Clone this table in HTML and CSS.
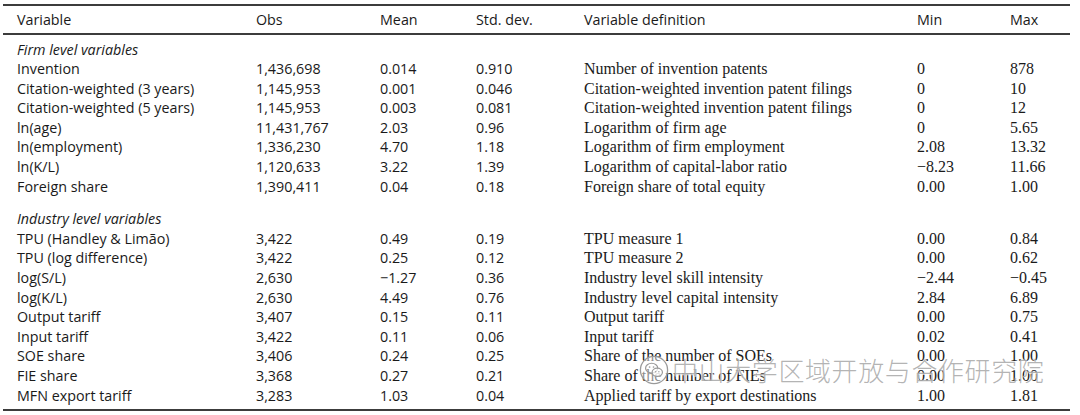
FILE: index.html
```html
<!DOCTYPE html>
<html lang="en">
<head>
<meta charset="utf-8">
<title>Summary statistics</title>
<link rel="stylesheet" href="styles.css">
</head>
<body>
<div class="page">
<table class="stats">
  <colgroup>
    <col class="c-var"><col class="c-obs"><col class="c-mean"><col class="c-sd"><col class="c-def"><col class="c-min"><col class="c-max">
  </colgroup>
  <thead>
    <tr><th class="first">Variable</th><th>Obs</th><th>Mean</th><th>Std. dev.</th><th>Variable definition</th><th>Min</th><th>Max</th></tr>
  </thead>
  <tbody>
    <tr class="sect top"><td class="first" colspan="7"><em>Firm level variables</em></td></tr>
    <tr><td class="first">Invention</td><td>1,436,698</td><td>0.014</td><td>0.910</td><td class="serif">Number of invention patents</td><td class="serif">0</td><td class="serif">878</td></tr>
    <tr><td class="first">Citation-weighted (3 years)</td><td>1,145,953</td><td>0.001</td><td>0.046</td><td class="serif">Citation-weighted invention patent filings</td><td class="serif">0</td><td class="serif">10</td></tr>
    <tr><td class="first">Citation-weighted (5 years)</td><td>1,145,953</td><td>0.003</td><td>0.081</td><td class="serif">Citation-weighted invention patent filings</td><td class="serif">0</td><td class="serif">12</td></tr>
    <tr><td class="first">ln(age)</td><td>11,431,767</td><td>2.03</td><td>0.96</td><td class="serif">Logarithm of firm age</td><td class="serif">0</td><td class="serif">5.65</td></tr>
    <tr><td class="first">ln(employment)</td><td>1,336,230</td><td>4.70</td><td>1.18</td><td class="serif">Logarithm of firm employment</td><td class="serif">2.08</td><td class="serif">13.32</td></tr>
    <tr><td class="first">ln(K/L)</td><td>1,120,633</td><td>3.22</td><td>1.39</td><td class="serif">Logarithm of capital-labor ratio</td><td class="serif">&minus;8.23</td><td class="serif">11.66</td></tr>
    <tr><td class="first">Foreign share</td><td>1,390,411</td><td>0.04</td><td>0.18</td><td class="serif">Foreign share of total equity</td><td class="serif">0.00</td><td class="serif">1.00</td></tr>
    <tr class="sect gap"><td class="first" colspan="7"><em>Industry level variables</em></td></tr>
    <tr><td class="first">TPU (Handley &amp; Limão)</td><td>3,422</td><td>0.49</td><td>0.19</td><td class="serif">TPU measure 1</td><td class="serif">0.00</td><td class="serif">0.84</td></tr>
    <tr><td class="first">TPU (log difference)</td><td>3,422</td><td>0.25</td><td>0.12</td><td class="serif">TPU measure 2</td><td class="serif">0.00</td><td class="serif">0.62</td></tr>
    <tr><td class="first">log(S/L)</td><td>2,630</td><td>&minus;1.27</td><td>0.36</td><td class="serif">Industry level skill intensity</td><td class="serif">&minus;2.44</td><td class="serif">&minus;0.45</td></tr>
    <tr><td class="first">log(K/L)</td><td>2,630</td><td>4.49</td><td>0.76</td><td class="serif">Industry level capital intensity</td><td class="serif">2.84</td><td class="serif">6.89</td></tr>
    <tr><td class="first">Output tariff</td><td>3,407</td><td>0.15</td><td>0.11</td><td class="serif">Output tariff</td><td class="serif">0.00</td><td class="serif">0.75</td></tr>
    <tr><td class="first">Input tariff</td><td>3,422</td><td>0.11</td><td>0.06</td><td class="serif">Input tariff</td><td class="serif">0.02</td><td class="serif">0.41</td></tr>
    <tr><td class="first">SOE share</td><td>3,406</td><td>0.24</td><td>0.25</td><td class="serif">Share of the number of SOEs</td><td class="serif">0.00</td><td class="serif">1.00</td></tr>
    <tr><td class="first">FIE share</td><td>3,368</td><td>0.27</td><td>0.21</td><td class="serif">Share of the number of FIEs</td><td class="serif">0.00</td><td class="serif">1.00</td></tr>
    <tr class="last"><td class="first">MFN export tariff</td><td>3,283</td><td>1.03</td><td>0.04</td><td class="serif">Applied tariff by export destinations</td><td class="serif">1.00</td><td class="serif">1.81</td></tr>
  </tbody>
</table>
<div class="watermark">
  <svg class="wm-icon" viewBox="0 0 32 32" width="30" height="30" aria-hidden="true">
    <circle cx="16" cy="16" r="14.5" fill="rgba(255,255,255,0.5)" stroke="#9a9a9a" stroke-width="1.4"/>
    <ellipse cx="13.5" cy="14" rx="6.5" ry="5.2" fill="none" stroke="#9a9a9a" stroke-width="1.3"/>
    <ellipse cx="19.5" cy="18.5" rx="5.5" ry="4.4" fill="rgba(255,255,255,0.7)" stroke="#9a9a9a" stroke-width="1.3"/>
    <circle cx="11.3" cy="12.8" r="0.9" fill="#9a9a9a"/>
    <circle cx="15.5" cy="12.8" r="0.9" fill="#9a9a9a"/>
    <circle cx="17.8" cy="17.8" r="0.75" fill="#9a9a9a"/>
    <circle cx="21.2" cy="17.8" r="0.75" fill="#9a9a9a"/>
  </svg>
  <span class="wm-text">中山大学区域开放与合作研究院</span>
</div>
</div>
</body>
</html>
```

FILE: styles.css
```css
html, body {
  margin: 0;
  padding: 0;
  background: #ffffff;
}

.page {
  position: relative;
  width: 1080px;
  height: 415px;
  padding-top: 4px;
  box-sizing: border-box;
}

.stats {
  margin-left: 3px;
  width: 1067px;
  border-collapse: collapse;
  table-layout: fixed;
  font-family: "Open Sans", "Noto Sans", sans-serif;
  font-size: 14.3px;
  color: #1a1a1a;
}

.c-var { width: 253px; }
.c-obs { width: 124px; }
.c-mean { width: 96px; }
.c-sd { width: 108px; }
.c-def { width: 333px; }
.c-min { width: 93px; }
.c-max { width: 60px; }

.stats th,
.stats td {
  padding: 0;
  text-align: left;
  white-space: nowrap;
  font-weight: normal;
  vertical-align: middle;
}

.stats thead tr {
  border-top: 2px solid #3c3c3c;
  border-bottom: 2px solid #3c3c3c;
}

.stats th {
  height: 27px;
  line-height: 27px;
}

.stats td {
  height: 19.6px;
  line-height: 19.6px;
}

.stats .first {
  padding-left: 14px;
}

.stats .serif {
  font-family: "Liberation Serif", "Times New Roman", serif;
  font-size: 16px;
}

.stats em {
  font-style: italic;
}

.stats tr.top td {
  padding-top: 4.5px;
}

.stats tr.gap td {
  padding-top: 13px;
}

.stats tr.last td {
  padding-bottom: 4px;
}

.stats tbody tr.last {
  border-bottom: 2px solid #3c3c3c;
}

.watermark {
  position: absolute;
  left: 639px;
  top: 354px;
  display: flex;
  align-items: center;
  gap: 3px;
  pointer-events: none;
}

.wm-icon {
  display: block;
}

.wm-text {
  font-family: "Noto Sans CJK SC", sans-serif;
  font-size: 26px;
  line-height: 32px;
  letter-spacing: 0.6px;
  color: rgba(130, 130, 130, 0.6);
  font-weight: 300;
  text-shadow: 0 0 1px rgba(255, 255, 255, 0.9), 1px 1px 0 rgba(255, 255, 255, 0.6);
}
```
